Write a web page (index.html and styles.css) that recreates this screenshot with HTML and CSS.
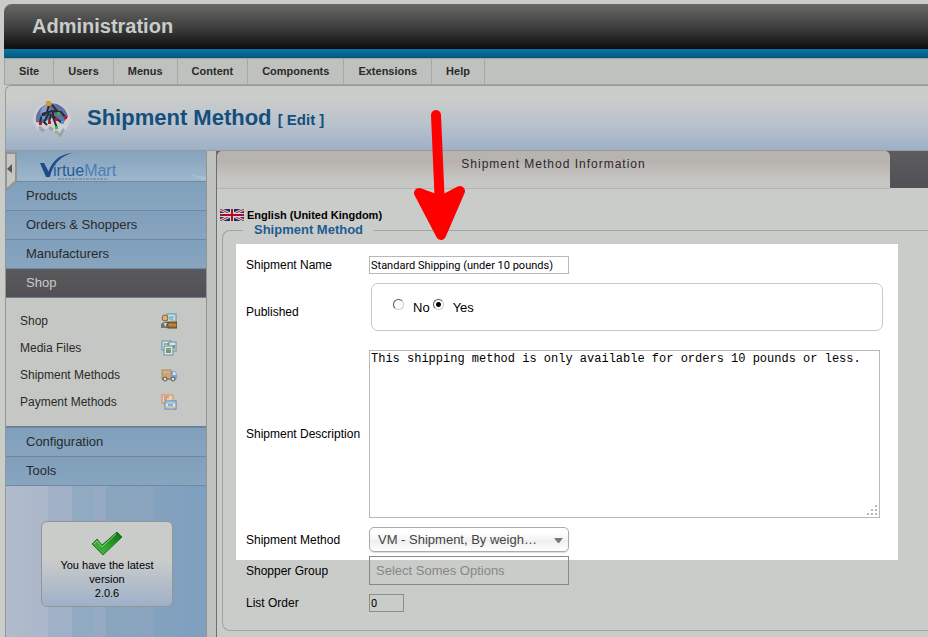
FILE: index.html
```html
<!DOCTYPE html>
<html lang="en">
<head>
	<title>Administration</title>
	<meta charset="utf-8">
	<link rel="stylesheet" href="styles.css">
</head>
<body>
	<div class="page">
		<header class="topbar">
			<h1>Administration</h1>
		</header>
		<nav>
			<ul class="menu">
				<li><a href="#">Site</a></li>
				<li><a href="#">Users</a></li>
				<li><a href="#">Menus</a></li>
				<li><a href="#">Content</a></li>
				<li><a href="#">Components</a></li>
				<li><a href="#">Extensions</a></li>
				<li><a href="#">Help</a></li>
			</ul>
		</nav>

		<div class="titlebar">
			<svg class="titleicon" width="48" height="48" viewBox="0 0 48 48">
				<circle cx="24" cy="23" r="21" fill="none" stroke="#c9bfc6" stroke-dasharray="2 1" opacity=".6"/>
				<path d="M5 28A19 19 0 1 1 43 26L38 36L30 42L22 34L10 36Z" fill="#ced0d3"/>
				<path d="M8 28A16 16 0 0 1 40 23L35 29L24 24L14 29Z" fill="#6071a8"/>
				<path d="M12 20A14 14 0 0 1 20 9L22 18Z" fill="#8e9dc4"/>
				<g fill="none" stroke="#777b82" stroke-width="3" opacity=".5">
					<path d="M11 33L16 37M21 33L25 36M27 37L32 41L36 35"/>
				</g>
				<g fill="none" stroke="#292d33" stroke-width="2">
					<path d="M21 11L19 18L13 24L12 29M14 20L24 17L33 18L38 24M24 11L30 18M25 17V23L29 34M25 22L34 29M21 19L16 28L19 31M23 20L21 28"/>
				</g>
				<rect x="18" y="7" width="5" height="5" rx="1" fill="#dc962b"/>
				<g fill="#c81429">
					<rect x="11" y="28" width="3" height="3"/>
					<rect x="20" y="27" width="3" height="3"/>
					<rect x="27" y="24" width="3" height="3"/>
					<rect x="36" y="22" width="3" height="3"/>
				</g>
				<g fill="#34b83c">
					<rect x="29" y="18" width="3" height="3"/>
					<rect x="27" y="32" width="3" height="3"/>
				</g>
				<g fill="#4d9bd3">
					<rect x="14" y="22" width="3" height="3"/>
					<rect x="33" y="27" width="3" height="3"/>
				</g>
			</svg>
			<h2>Shipment Method <small>[ Edit ]</small></h2>
		</div>

		<div class="columns">
			<aside class="sidebar">
				<button class="collapse" type="button" aria-label="Collapse menu">
					<svg width="12" height="40" viewBox="0 0 12 40">
						<path d="M0 1H10V29L1 37H0Z" fill="#c6c7c5" stroke="#92948f" stroke-width="2"/>
						<path d="M6 12V21L1 17Z" fill="#555"/>
					</svg>
				</button>
				<div class="logo">
					<svg width="200" height="30" viewBox="0 0 200 30">
						<path d="M185 23Q193 26 200 26V30Q190 28 185 23Z" fill="#a9bfd2"/>
						<path d="M41 26C44 12 52 3 67 2C55 5 47 12 44 26Z" fill="#1d4c8b"/>
						<path d="M34 12H38L44 23L42 26H40Z" fill="#1d4c8b"/>
						<text class="logotext" x="47" y="25">irtue<tspan class="logolight">Mart</tspan></text>
						<path d="M52 28H102" stroke="#5c789c" stroke-dasharray="3 1 2 1"/>
					</svg>
				</div>
				<a class="section" href="#">Products</a>
				<a class="section" href="#">Orders &amp; Shoppers</a>
				<a class="section" href="#">Manufacturers</a>
				<a class="section active" href="#">Shop</a>
				<ul class="submenu">
					<li><a href="#">Shop
						<svg width="16" height="16" viewBox="0 0 16 16">
							<rect x="6" y="1" width="9" height="9" fill="#c9dde5" stroke="#5f91ba"/>
							<path d="M8 4H13M8 6H12" stroke="#38a8ce"/>
							<path d="M0 15V11L3 9H7V15Z" fill="#727272"/>
							<path d="M3 10L4 14L6 10" fill="#ddd"/>
							<circle cx="4" cy="5" r="3" fill="#dbb078" stroke="#8b6237"/>
							<rect x="7" y="9" width="9" height="6" fill="#98713a" stroke="#65431f"/>
							<path d="M10 9V7H13V9M7 12H15" fill="none" stroke="#c7a25b"/>
						</svg>
					</a></li>
					<li><a href="#">Media Files
						<svg width="16" height="16" viewBox="0 0 16 16">
							<g fill="#d8e3e7" stroke="#688db4">
								<rect x="1" y="1" width="9" height="9"/>
								<rect x="8" y="2" width="7" height="9"/>
								<rect x="3" y="6" width="9" height="9"/>
							</g>
							<path d="M3 3H8V5H3ZM11 5H14V9H13ZM5 8H10V13H5Z" fill="#769d61"/>
							<path d="M5 8H8L5 11Z" fill="#5dadd0"/>
							<path d="M4 3H6V5H4ZM8 9H10V10H8Z" fill="#d3ba4e"/>
						</svg>
					</a></li>
					<li><a href="#">Shipment Methods
						<svg width="16" height="16" viewBox="0 0 16 16">
							<rect x="1" y="3" width="9" height="9" fill="#cda477" stroke="#b6895b"/>
							<path d="M2 5H9" stroke="#dec39e"/>
							<path d="M10 4H14L16 7V12H10Z" fill="#7ca6d0"/>
							<path d="M12 5H14L15 8H12Z" fill="#d9e8ed"/>
							<path d="M1 12H15" stroke="#777"/>
							<g fill="#ddd" stroke="#555">
								<circle cx="4" cy="12" r="2"/>
								<circle cx="12" cy="12" r="2"/>
							</g>
						</svg>
					</a></li>
					<li><a href="#">Payment Methods
						<svg width="16" height="16" viewBox="0 0 16 16">
							<rect x="1" y="1" width="11" height="8" fill="#e2d3bb" stroke="#d09157"/>
							<path d="M3 3H8M3 5H6" stroke="#dc594f"/>
							<rect x="4" y="7" width="11" height="8" fill="#dee9ec" stroke="#4982b8"/>
							<path d="M5 9H14" stroke="#73a6cf"/>
							<path d="M7 11H12" stroke="#376d9f"/>
							<path d="M5 13H14" stroke="#dd9b52"/>
						</svg>
					</a></li>
				</ul>
				<a class="section" href="#">Configuration</a>
				<a class="section" href="#">Tools</a>
				<div class="sidefoot">
					<div class="version">
						<svg width="32" height="26" viewBox="0 0 32 26">
							<defs>
								<linearGradient id="tick" x1="0" y1="1" x2="1" y2="0">
									<stop offset="0" stop-color="#55b84d"/>
									<stop offset=".5" stop-color="#28a324"/>
									<stop offset="1" stop-color="#156817"/>
								</linearGradient>
							</defs>
							<path d="M1 13L6 8L11 14L26 1L31 6L12 24Z" fill="url(#tick)" stroke="#267226"/>
							<path d="M3 13L6 10L11 16L25 3" fill="none" stroke="#86c87e"/>
						</svg>
						<div>You have the latest version<br>2.0.6</div>
					</div>
				</div>
			</aside>

			<main class="main">
				<div class="tabs">
					<div class="tab">Shipment Method Information</div>
				</div>
				<div class="language">
					<svg width="24" height="12" viewBox="0 0 24 12">
						<rect width="24" height="12" fill="#1e2a66"/>
						<path d="M0 0L24 12M24 0L0 12" stroke="#ced0d0" stroke-width="3"/>
						<path d="M0 0L24 12M24 0L0 12" stroke="#ad2436"/>
						<path d="M12 0V12M0 6H24" stroke="#d6d6d6" stroke-width="4"/>
						<path d="M12 0V12M0 6H24" stroke="#b10a29" stroke-width="2"/>
					</svg>
					English (United Kingdom)
				</div>

				<form>
					<fieldset class="panel">
						<legend>Shipment Method</legend>
						<div class="rows highlight">
							<label for="name">Shipment Name</label>
							<input class="text" id="name" type="text" value="Standard Shipping (under 10 pounds)">

							<span id="published">Published</span>
							<div class="choices" role="radiogroup" aria-labelledby="published">
								<input type="radio" name="published" id="no"><label for="no">No</label>
								<input type="radio" name="published" id="yes" checked><label for="yes">Yes</label>
							</div>

							<label for="description">Shipment Description</label>
							<div class="description">
								<textarea id="description">This shipping method is only available for orders 10 pounds or less.</textarea>
								<svg class="grip" width="10" height="10" viewBox="0 0 10 10">
									<path d="M8 0H10V2H8ZM4 4H6V6H4ZM8 4H10V6H8ZM0 8H2V10H0ZM4 8H6V10H4ZM8 8H10V10H8Z" fill="#b8b8b8"/>
								</svg>
							</div>

							<label for="method">Shipment Method</label>
							<div class="chooser">
								<select id="method">
									<option>VM - Shipment, By weigh…</option>
								</select>
								<svg class="caret" width="9" height="5" viewBox="0 0 9 5">
									<path d="M0 0H9L5 5H4Z" fill="#777"/>
								</svg>
							</div>
						</div>
						<div class="rows more">
							<label for="group">Shopper Group</label>
							<input class="group" id="group" type="text" placeholder="Select Somes Options">

							<label for="order">List Order</label>
							<input class="text order" id="order" type="text" value="0">
						</div>
					</fieldset>
				</form>
			</main>
		</div>

		<svg class="arrow" width="54" height="136" viewBox="0 0 54 136">
			<path d="M23 8L27 100" stroke="#fe0000" stroke-width="10" stroke-linecap="round"/>
			<path d="M6 86L28 94L47 84L28 128Z" fill="#fe0000" stroke="#fe0000" stroke-width="10" stroke-linejoin="round"/>
		</svg>
	</div>
</body>
</html>
```

FILE: styles.css
```css
* {
	box-sizing: border-box;
}
body {
	margin: 0;
	background-color: #cacccA;
	font-family: "Liberation Sans", Arial, sans-serif;
	font-size: 12px;
	color: #000;
}
a {
	color: #2a2a2a;
	text-decoration: none;
}
.page {
	position: relative;
	display: flex;
	flex-direction: column;
	min-height: 100vh;
	padding: 4px 0 0 4px;
}

/* header */
.topbar {
	border-top-left-radius: 8px;
	background: linear-gradient(#686967, #3c3d3c 45%, #0a0b0a 84%);
}
.topbar::after {
	content: "";
	display: block;
	height: 9px;
	background: linear-gradient(#0a76a6, #03577f);
}
.topbar h1 {
	margin: 0;
	padding: 0 0 1px 28px;
	font-size: 20px;
	line-height: 44px;
	color: #cacccA;
}
.menu {
	display: flex;
	height: 27px;
	margin: 0;
	padding: 0;
	list-style: none;
	background-color: #bfc1be;
	border: solid #a2a4a1;
	border-width: 1px 0 1px 1px;
}
.menu a {
	display: block;
	padding: 0 14px;
	border-right: 1px solid #a6a8a5;
	font-size: 11px;
	font-weight: bold;
	line-height: 25px;
}
.menu a:hover {
	background-color: #cacccA;
}
.titlebar {
	display: flex;
	align-items: center;
	gap: 11px;
	height: 66px;
	margin-left: 1px;
	padding-left: 22px;
	border: solid #999b98;
	border-width: 1px 0 1px 1px;
	border-top-left-radius: 6px;
	background: linear-gradient(#cacccA 20%, #b9c2cc 60%, #9eb0c8);
}
.titlebar h2 {
	margin: 0;
	font-size: 22px;
	color: #144f7d;
}
.titlebar small {
	font-size: 15px;
}
.columns {
	display: flex;
	flex: 1;
	margin-left: 1px;
}

/* left column */
.sidebar {
	position: relative;
	display: flex;
	flex-direction: column;
	width: 202px;
	border: solid #949693;
	border-width: 0 1px;
}
.collapse {
	position: absolute;
	top: 1px;
	left: 0;
	padding: 0;
	border: 0;
	background: none;
	cursor: pointer;
}
.logo {
	height: 30px;
	background: linear-gradient(#84a3be, #9fb7cb);
}
.logotext {
	font-size: 16px;
	fill: #265b96;
}
.logolight {
	fill: #4a7fb4;
}
.section {
	height: 29px;
	padding-left: 20px;
	border-top: 1px solid #7088a5;
	background: linear-gradient(#7f9fbb, #88a5bf);
	font-size: 13px;
	line-height: 28px;
}
.section:hover {
	background: #8fabc4;
}
.section.active {
	background: linear-gradient(#5a5a5c, #525055);
	color: #cacccA;
}
.submenu {
	margin: 0;
	padding: 9px 29px 11px 14px;
	border: solid #6d7f96;
	border-width: 1px 0;
	list-style: none;
	background-color: #c5c7c4;
}
.submenu a {
	display: flex;
	align-items: center;
	justify-content: space-between;
	height: 27px;
}
.sidefoot {
	flex: 1;
	padding: 35px 33px 30px 35px;
	border-top: 1px solid #7088a5;
	background: linear-gradient(90deg, #b0bbcc 0, #abb7ca 42px, #9fb0c7 42px, #9fb0c7 66px, #90aac1 66px, #90aac1 88px, #97aac3 88px, #97aac3 100px, #89a6be 100px, #8ba4c0 148px, #83a2bf 148px, #7f9fbf);
}
.version {
	height: 86px;
	padding: 9px 16px 0;
	border: 1px solid #949693;
	border-radius: 6px;
	background: linear-gradient(#cacccA 45%, #9eb0c8);
	font-size: 11px;
	line-height: 14px;
	text-align: center;
}
.version svg {
	display: block;
	margin: 0 auto 1px;
}

/* right column */
.main {
	flex: 1;
	margin-left: 9px;
	border-left: 1px solid #6c6e6c;
	box-shadow: -9px 0 #bfc1be;
}
.tabs {
	height: 37px;
	padding-right: 38px;
	background: linear-gradient(#5c5c5e, #525055);
}
.tab {
	height: 38px;
	border-bottom: 1px solid #b3b5b2;
	border-radius: 5px 5px 0 0;
	background: linear-gradient(#b9b3b0 30%, #c6c7c4 80%);
	letter-spacing: 1px;
	line-height: 26px;
	text-align: center;
	color: #2a2a2a;
}
.language {
	display: flex;
	align-items: center;
	gap: 3px;
	height: 14px;
	margin: 20px 0 0 3px;
	font-size: 11px;
	font-weight: bold;
}
.panel {
	margin: 0 0 0 5px;
	padding: 6px 0 18px 13px;
	border: 1px solid #a1a3a0;
	border-right: 0;
	border-radius: 8px 0 0 8px;
}
.panel legend {
	margin-left: 7px;
	padding: 0 11px;
	font-size: 13px;
	font-weight: bold;
	line-height: 16px;
	color: #1f5c8e;
}
.rows {
	display: grid;
	grid-template-columns: 123px 1fr;
	row-gap: 9px;
	align-items: center;
	margin-right: 30px;
	padding: 0 15px 0 10px;
}
.highlight {
	padding-top: 12px;
	padding-bottom: 8px;
	background-color: #fff;
}
.more {
	margin-top: -4px;
}
.text {
	width: 200px;
	height: 18px;
	padding: 0 1px;
	border: 1px solid #b8b8b8;
	background: none;
	font-family: Roboto, sans-serif;
	font-size: 11px;
}
.order {
	width: 35px;
	border-color: #8c8e8b;
}
.choices {
	display: flex;
	align-items: center;
	height: 48px;
	margin: 0 0 10px 2px;
	padding-left: 21px;
	border: 1px solid #c6c8c5;
	border-radius: 7px;
	font-size: 13px;
}
.choices input {
	appearance: none;
	width: 11px;
	height: 11px;
	margin: 0 9px 5px 0;
	border: 1px solid;
	border-color: #555 #ccc #ccc #555;
	border-radius: 50%;
}
.choices input:checked {
	background: radial-gradient(#000 2px, #fff 3px);
}
.choices label {
	margin-right: 3px;
}
.description {
	position: relative;
	height: 168px;
	margin-right: 3px;
}
.description textarea {
	display: block;
	width: 100%;
	height: 100%;
	padding: 1px;
	border: 1px solid #b8b8b8;
	resize: none;
	font-family: "Liberation Mono", monospace;
	font-size: 12px;
}
.grip {
	position: absolute;
	right: 3px;
	bottom: 3px;
}
.chooser {
	position: relative;
	width: 200px;
}
.chooser select {
	display: block;
	appearance: none;
	width: 100%;
	height: 25px;
	padding: 0 8px;
	border: 1px solid #aaa;
	border-radius: 5px;
	background: linear-gradient(#fff 20%, #f4f4f4 50%, #eee 52%, #fff);
	box-shadow: 0 1px 1px #ddd;
	font-family: inherit;
	font-size: 13px;
	color: #444;
}
.caret {
	position: absolute;
	top: 11px;
	right: 6px;
	pointer-events: none;
}
.group {
	width: 200px;
	height: 29px;
	padding: 0 6px;
	border: 1px solid #888a87;
	background: none;
	font-family: inherit;
	font-size: 13px;
}
.group::placeholder {
	color: #868885;
}

/* pointer over the form */
.arrow {
	position: absolute;
	top: 107px;
	left: 413px;
	fill: none;
	pointer-events: none;
}
```
